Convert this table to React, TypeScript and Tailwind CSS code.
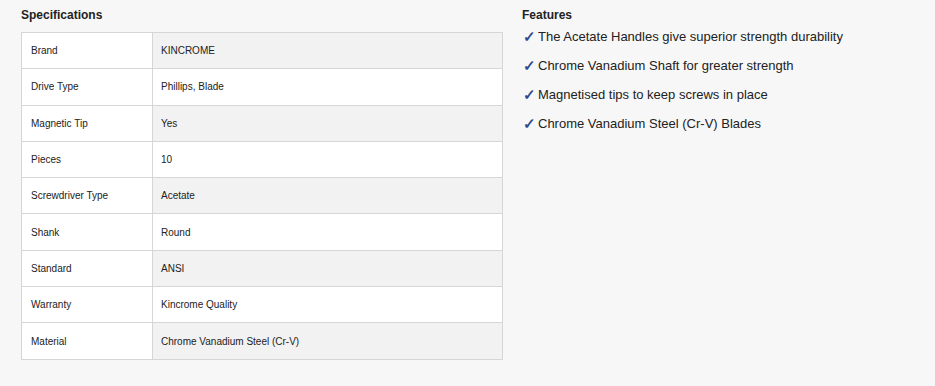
import * as React from 'react';

const specs: [string, string][] = [
  ['Brand', 'KINCROME'],
  ['Drive Type', 'Phillips, Blade'],
  ['Magnetic Tip', 'Yes'],
  ['Pieces', '10'],
  ['Screwdriver Type', 'Acetate'],
  ['Shank', 'Round'],
  ['Standard', 'ANSI'],
  ['Warranty', 'Kincrome Quality'],
  ['Material', 'Chrome Vanadium Steel (Cr-V)'],
];

const features = [
  'The Acetate Handles give superior strength durability',
  'Chrome Vanadium Shaft for greater strength',
  'Magnetised tips to keep screws in place',
  'Chrome Vanadium Steel (Cr-V) Blades',
];

const App: React.FC = () => {
  return (
    <div
      className="w-[935px] h-[386px] bg-[#f7f7f7] text-[#222] flex"
      style={{ fontFamily: '"Liberation Sans", Arial, sans-serif' }}
    >
      <div className="w-[482px] ml-[21px] pt-[8px]">
        <h3 className="text-[12px] font-bold leading-[14px] mb-[10px]">Specifications</h3>
        <table className="w-full border-collapse text-[10px]">
          <tbody>
            {specs.map(([label, value], i) => (
              <tr key={label}>
                <td className="w-[131px] h-[36.3px] border border-[#d6d6d6] bg-white pl-[9px]">{label}</td>
                <td
                  className={`h-[36.3px] border border-[#d6d6d6] pl-[8px] ${
                    i % 2 === 0 ? 'bg-[#f2f2f2]' : 'bg-white'
                  }`}
                >
                  {value}
                </td>
              </tr>
            ))}
          </tbody>
        </table>
      </div>

      <div className="ml-[19px] pt-[8px]">
        <h3 className="text-[12px] font-bold leading-[14px] mb-[5px]">Features</h3>
        <ul className="flex flex-col gap-[10px]">
          {features.map((f) => (
            <li key={f} className="flex items-center text-[13px] leading-[19px]">
              <span className="text-[#2d4a8f] w-[16px] pl-[1px] text-[15px] font-bold">✓</span>
              <span>{f}</span>
            </li>
          ))}
        </ul>
      </div>
    </div>
  );
};

export default App;
